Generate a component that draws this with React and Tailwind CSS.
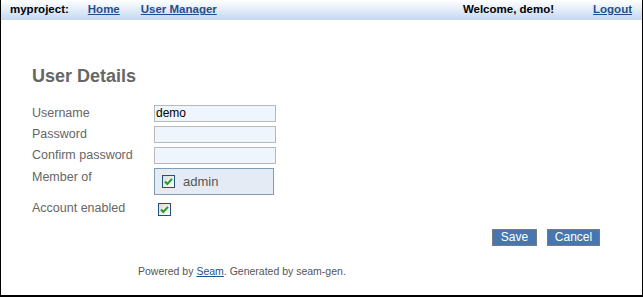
import React from 'react';

const Check = () => (
  <span className="inline-flex h-[13px] w-[13px] items-center justify-center border border-[#1c5180] bg-gradient-to-br from-[#dcdcd6] to-white">
    <svg width="9" height="9" viewBox="0 0 9 9">
      <path d="M1 4.5 L3.3 7 L8 1.8" fill="none" stroke="#21a121" strokeWidth="2" />
    </svg>
  </span>
);

const Row = ({ label, children, top = false, className = '' }) => (
  <div className={`flex ${top ? 'items-start' : 'items-center'} ${className}`}>
    <div className={`w-[122px] shrink-0 text-[12.5px] leading-[15px] text-[#666666] ${top ? 'pt-[2px]' : ''}`}>{label}</div>
    {children}
  </div>
);

const Field = ({ value = '' }) => (
  <div className="h-[17px] w-[122px] border border-[#b9b9b9] bg-[#eef5fd] pl-[1px] text-[12px] leading-[15px] text-black">
    {value}
  </div>
);

export default function App() {
  return (
    <div className="box-border h-[297px] w-[643px] border-b-2 border-l border-r border-black bg-white font-['Liberation_Sans',Arial,sans-serif]">
      <div className="flex h-[20px] items-center bg-gradient-to-b from-white to-[#c4d8f1] pl-[9px] pr-[10px] text-[11.5px] font-bold">
        <span className="text-black">myproject:</span>
        <a className="ml-[19px] text-[#1d4f8d] underline">Home</a>
        <a className="ml-[21px] text-[#1d4f8d] underline">User Manager</a>
        <span className="ml-auto text-black">Welcome, demo!</span>
        <a className="ml-[39px] text-[#1d4f8d] underline">Logout</a>
      </div>

      <div className="pl-[31px]">
        <h1 className="mt-[46px] text-[18px] font-bold leading-[20px] text-[#666666]">User Details</h1>

        <div className="mt-[19px] flex flex-col">
          <Row label="Username">
            <Field value="demo" />
          </Row>
          <Row label="Password" className="mt-[4px]">
            <Field />
          </Row>
          <Row label="Confirm password" className="mt-[4px]">
            <Field />
          </Row>
          <Row label="Member of" top className="mt-[4px]">
            <div className="flex h-[27px] w-[120px] items-center border border-[#7f9db9] bg-[#e4ebf5] pl-[7px]">
              <Check />
              <span className="ml-[8px] text-[13px] text-[#555555]">admin</span>
            </div>
          </Row>
          <Row label="Account enabled" className="mt-[5px] h-[17px]">
            <div className="pl-[4px]">
              <Check />
            </div>
          </Row>
        </div>
      </div>

      <div className="mt-[12px] flex justify-end gap-[10px] pr-[42px]">
        <button className="h-[17px] w-[45px] border border-[#7a7a7a] bg-[#4677b0] text-[12px] leading-[15px] text-white">Save</button>
        <button className="h-[17px] w-[53px] border border-[#7a7a7a] bg-[#4677b0] text-[12px] leading-[15px] text-white">Cancel</button>
      </div>

      <div className="mt-[18px] pl-[137px] text-[10.5px] leading-[14px] text-[#555555]">
        Powered by <a className="text-[#1d4f8d] underline">Seam</a>. Generated by seam-gen.
      </div>
    </div>
  );
}
